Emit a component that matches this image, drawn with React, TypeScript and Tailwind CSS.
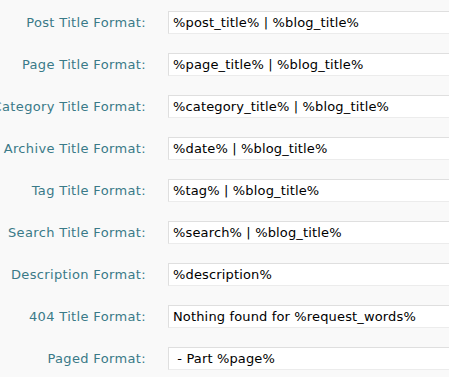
const ROWS: [string, string][] = [
  ["Post Title Format:", "%post_title% | %blog_title%"],
  ["Page Title Format:", "%page_title% | %blog_title%"],
  ["Category Title Format:", "%category_title% | %blog_title%"],
  ["Archive Title Format:", "%date% | %blog_title%"],
  ["Tag Title Format:", "%tag% | %blog_title%"],
  ["Search Title Format:", "%search% | %blog_title%"],
  ["Description Format:", "%description%"],
  ["404 Title Format:", "Nothing found for %request_words%"],
  ["Paged Format:", " - Part %page%"],
];

export default function App() {
  return (
    <div
      className="w-[449px] h-[377px] overflow-hidden bg-[#f9f9f9] pt-[11px]"
      style={{ fontFamily: '"DejaVu Sans", Verdana, sans-serif' }}
    >
      {ROWS.map(([label, value]) => (
        <div key={label} className="flex items-center h-[23px] mb-[19px]">
          <label className="w-[146px] shrink-0 text-right whitespace-nowrap text-[13px] tracking-[0.35px] text-[#3a7a88] flex justify-end">
            {label}
          </label>
          <div className="ml-[22px] w-[300px] shrink-0 h-[23px] bg-white border border-[#dfdfdf] border-b-[#ececec] flex items-center pl-[4px] text-[13px] tracking-[0.15px] text-black whitespace-pre">
            {value}
          </div>
        </div>
      ))}
    </div>
  );
}
